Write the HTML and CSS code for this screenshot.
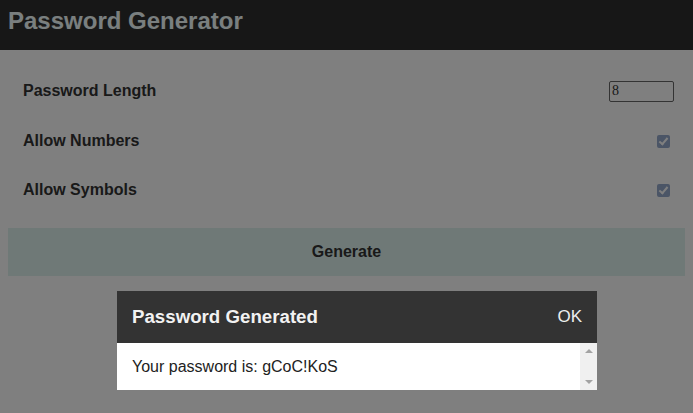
FILE: index.html
```html
<!DOCTYPE html>
<html>
<head>
<meta charset="utf-8">
<link rel="stylesheet" href="styles.css">
</head>
<body>
<header class="topbar"><h1 class="title">Password Generator</h1></header>
<main class="content">
  <div class="row"><span class="label">Password Length</span><input class="num" type="text" value="8"></div>
  <div class="row"><span class="label">Allow Numbers</span><span class="check"></span></div>
  <div class="row"><span class="label">Allow Symbols</span><span class="check"></span></div>
  <button class="generate">Generate</button>
</main>
<div class="overlay"></div>
<div class="modal">
  <div class="modal-head"><span class="modal-title">Password Generated</span><span class="ok">OK</span></div>
  <div class="modal-body">
    <div class="modal-text">Your password is: gCoC!KoS</div>
    <div class="scrollbar"><span class="arrow up"></span><span class="arrow down"></span></div>
  </div>
</div>
</body>
</html>
```
FILE: styles.css
```css
html, body { margin: 0; padding: 0; }
body {
  background: #ffffff;
  font-family: "Liberation Sans", Arial, sans-serif;
  width: 693px;
  height: 413px;
  overflow: hidden;
}
.topbar {
  height: 50px;
  background: #2e2e2e;
  display: flex;
  align-items: center;
  padding-left: 8px;
}
.title {
  margin: 0;
  font-size: 24px;
  font-weight: bold;
  color: #f4ffff;
  position: relative;
  top: -4px;
}
.content {
  padding: 16px 8px 0 8px;
  display: flex;
  flex-direction: column;
}
.row {
  height: 50px;
  display: flex;
  align-items: center;
  justify-content: space-between;
  padding: 0 19px 0 15px;
}
.row:nth-child(3) { height: 48px; }
.label {
  font-size: 16px;
  font-weight: bold;
  color: #333333;
}
.num {
  width: 59px;
  height: 19px;
  box-sizing: content-box;
  padding: 0 2px;
  margin-right: -8px;
  border: 1px solid #666;
  border-radius: 2px;
  font-family: "Liberation Serif", serif;
  font-size: 14px;
  color: #333;
  background: #fff;
}
.check {
  width: 13px;
  height: 13px;
  border-radius: 2px;
  background: #97abcc;
  position: relative;
  margin-right: -4px;
}
.check::after {
  content: "";
  position: absolute;
  left: 4px;
  top: 1px;
  width: 3px;
  height: 7px;
  border: solid #fff;
  border-width: 0 2px 2px 0;
  transform: rotate(40deg);
}
.generate {
  margin-top: 14px;
  height: 48px;
  border: none;
  background: #def2ee;
  font-family: "Liberation Sans", Arial, sans-serif;
  font-size: 16px;
  font-weight: bold;
  color: #333;
}
.overlay {
  position: fixed;
  inset: 0;
  background: rgba(0, 0, 0, 0.5);
}
.modal {
  position: fixed;
  left: 117px;
  top: 291px;
  width: 480px;
}
.modal-head {
  height: 52px;
  background: #333333;
  display: flex;
  align-items: center;
  justify-content: space-between;
  padding: 0 15px;
}
.modal-title {
  font-size: 18.7px;
  font-weight: bold;
  color: #f2f2f2;
}
.ok {
  font-size: 17px;
  color: #eeeeee;
}
.modal-body {
  height: 47px;
  background: #fff;
  display: flex;
}
.modal-text {
  flex: 1;
  padding-left: 15px;
  font-size: 16px;
  color: #222;
  display: flex;
  align-items: center;
}
.scrollbar {
  width: 17px;
  background: #f0f0f0;
  display: flex;
  flex-direction: column;
  justify-content: space-between;
  align-items: center;
  padding: 6px 0;
  box-sizing: border-box;
}
.arrow {
  width: 0;
  height: 0;
  border-left: 4px solid transparent;
  border-right: 4px solid transparent;
}
.arrow.up { border-bottom: 4px solid #a3a3a3; }
.arrow.down { border-top: 4px solid #a3a3a3; }
```
